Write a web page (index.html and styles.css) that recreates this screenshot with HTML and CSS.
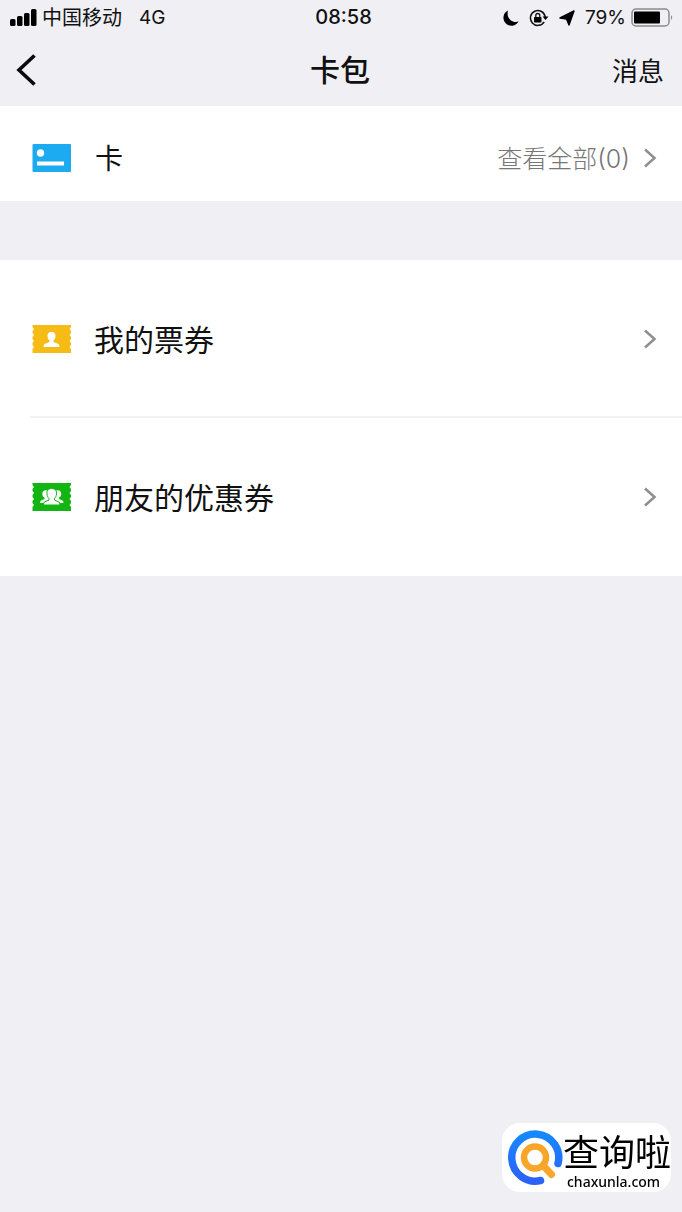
FILE: index.html
```html
<!DOCTYPE html>
<html lang="zh-CN">
<head>
<meta charset="utf-8">
<meta name="viewport" content="width=device-width, initial-scale=1">
<title>卡包</title>
<link rel="stylesheet" href="styles.css">
</head>
<body>
<div class="status">
  <div class="status-left">
    <svg class="signal" viewBox="0 0 27 17" aria-hidden="true"><rect x="0" y="10" width="5.500" height="7" rx="1.5"/><rect x="7" y="7" width="5.500" height="10" rx="1.5"/><rect x="14" y="4" width="5.500" height="13" rx="1.5"/><rect x="21" y="0" width="5.500" height="17" rx="1.5"/></svg>
    <span>中国移动</span>
    <span class="network">4G</span>
  </div>
  <time class="clock">08:58</time>
  <div class="status-right">
    <svg class="moon" viewBox="0 0 16 16" aria-hidden="true"><path d="M5 .5A8 8 0 1 0 15.500 11.500C8.500 13.500 3 7.500 5 .5Z"/></svg>
    <svg class="lock" viewBox="0 0 20 18" aria-hidden="true"><path d="M16.200 8A7.400 7.400 0 1 0 15.200 12.800" fill="none" stroke="#111" stroke-width="1.500"/><path d="M13.500 7.500H19.500L16.500 11Z"/><rect x="5" y="8" width="7.500" height="5.500" rx=".7"/><path d="M6.800 8V6.500a2 2 0 0 1 4 0V8" fill="none" stroke="#111" stroke-width="1.300"/></svg>
    <svg class="arrow" viewBox="0 0 16 16" aria-hidden="true"><path d="M15 1L10 15L7.500 9L1 8Z" stroke="#000" stroke-width="1.400" stroke-linejoin="round"/></svg>
    <span>79%</span>
    <svg class="battery" viewBox="0 0 43 19" aria-hidden="true"><rect x="1" y="1" width="37" height="17" rx="4" fill="none" stroke="#8b8b8f" stroke-width="1.500"/><rect x="3" y="3.500" width="26" height="12" rx="1"/><path d="M40 7q2.500 2.500 0 5Z" fill="#8b8b8f"/></svg>
  </div>
</div>
<header class="nav">
  <button class="back" type="button" aria-label="返回"><svg viewBox="0 0 20 32" aria-hidden="true"><path d="M18.500 1.500L3 16L18.500 30.500" fill="none" stroke="#0b0b0d" stroke-width="3.600"/></svg></button>
  <h1 class="title">卡包</h1>
  <a class="messages" href="#messages">消息</a>
</header>
<main>
  <section class="group">
    <a class="row row-card" href="#cards">
      <svg class="icon" viewBox="0 0 39 28" aria-hidden="true"><rect x=".5" width="38.500" height="28" rx="1" fill="#1caaf0"/><circle cx="8.500" cy="9" r="3.700" fill="#fff"/><rect x="5" y="17.500" width="27" height="4" fill="#fff"/></svg>
      <span class="label">卡</span>
      <span class="count">查看全部(0)</span>
      <svg class="chevron" viewBox="0 0 14 20" aria-hidden="true"><path d="M2 1.500L11.500 10L2 18.500"/></svg>
    </a>
  </section>
  <section class="group">
    <a class="row" href="#tickets">
      <svg class="icon" viewBox="0 0 39 28" aria-hidden="true"><path fill="#f7bb16" d="M.5 0H39V2L37.500 4L39 6V8L37.500 10L39 12V14L37.500 16L39 18V20L37.500 22L39 24V28H.5V24L2 22L.5 20V18L2 16L.5 14V12L2 10L.5 8V6L2 4L.5 2Z"/><path fill="#fff" d="M19.500 7C16.300 7 15.300 9 15.500 11.500C15.700 13.500 16.500 14.500 17.500 15.500V17L12.500 19Q11.500 19.500 11.500 22H27.500Q27.500 19.500 26.500 19L21.500 17V15.500C22.500 14.500 23.300 13.500 23.500 11.500C23.700 9 22.700 7 19.500 7Z"/></svg>
      <span class="label">我的票券</span>
      <svg class="chevron" viewBox="0 0 14 20" aria-hidden="true"><path d="M2 1.500L11.500 10L2 18.500"/></svg>
    </a>
    <a class="row" href="#coupons">
      <svg class="icon" viewBox="0 0 39 28" aria-hidden="true"><path fill="#12b512" d="M.5 0H39V2L37.500 4L39 6V8L37.500 10L39 12V14L37.500 16L39 18V20L37.500 22L39 24V28H.5V24L2 22L.5 20V18L2 16L.5 14V12L2 10L.5 8V6L2 4L.5 2Z"/><g fill="#fff"><circle cx="14" cy="11" r="3.700"/><circle cx="25.500" cy="11" r="3.700"/><path d="M12.500 13H17V20H8Q8 18 9 17.500L12.500 16ZM27 13H22V20H31.500Q31.500 18 30.500 17.500L27 16Z"/><path stroke="#12b512" stroke-width="1" d="M19.750 5.500C16 5.500 14.600 8 15 11C15.300 13.500 16 14.500 17 15.500V17L12.500 19Q11.500 19.500 11.500 22H28Q28 19.500 27 19L22.500 17V15.500C23.500 14.500 24.200 13.500 24.500 11C24.900 8 23.500 5.500 19.750 5.500Z"/></g></svg>
      <span class="label">朋友的优惠券</span>
      <svg class="chevron" viewBox="0 0 14 20" aria-hidden="true"><path d="M2 1.500L11.500 10L2 18.500"/></svg>
    </a>
  </section>
</main>
<aside class="brand">
  <svg class="brand-mark" viewBox="0 0 56 56" aria-hidden="true">
    <defs><linearGradient id="ring" x1="0" y1="0" x2="0" y2="1"><stop offset="0" stop-color="#1688ff"/><stop offset="1" stop-color="#2c62f6"/></linearGradient></defs>
    <path d="M33.500 50.500A23.500 23.500 0 1 1 51 33.500" fill="none" stroke="url(#ring)" stroke-width="7.500" stroke-linecap="round"/>
    <circle cx="28" cy="27.500" r="11" fill="none" stroke="#f8a62a" stroke-width="6.500"/><path d="M37 36.500L44.500 44.500" stroke="#f8a62a" stroke-width="7" stroke-linecap="round"/>
  </svg>
  <div class="brand-text"><span class="brand-name">查询啦</span><span class="brand-url">chaxunla.com</span></div>
</aside>
</body>
</html>
```
FILE: styles.css
```css
* { box-sizing: border-box; }
body {
  margin: 0;
  min-height: 100vh;
  background: #efeff4;
  color: #111;
  font-family: Inter, "Noto Sans CJK SC", sans-serif;
}
svg { display: block; flex: none; }
a { color: inherit; text-decoration: none; }
.status, .nav {
  display: grid;
  grid-template-columns: 1fr auto 1fr;
  align-items: center;
}
.status { height: 34px; padding: 0 8px 0 10px; font-size: 20px; line-height: 30px; }
.status-left, .status-right { display: flex; align-items: center; padding-top: 1px; }
.status-left { gap: 5px; }
.status-right { justify-content: flex-end; gap: 10px; font-size: 19px; }
.signal { width: 27px; height: 17px; }
.network { margin-left: 12px; font-size: 19px; }
.clock { padding-left: 3px; font-size: 20px; font-weight: 500; }
.moon, .arrow { width: 16px; height: 16px; }
.lock { width: 20px; height: 18px; }
.battery { width: 43px; height: 19px; margin-left: -5px; }
.nav { height: 72px; padding: 0 18px 0 16px; }
.back { width: 44px; padding: 0; border: 0; background: none; }
.back svg { width: 20px; height: 32px; }
.title { margin: 0; font-size: 30px; line-height: 40px; font-weight: 500; }
.messages { justify-self: end; padding-top: 3px; font-size: 26px; line-height: 36px; }
main { display: grid; gap: 59px; }
.group { background: #fff; }
.row {
  display: flex;
  align-items: center;
  height: 158px;
  padding: 0 25px 0 32px;
  font-size: 30px;
  line-height: 40px;
}
.row:not(:last-child) {
  background: linear-gradient(#f2f2f2, #f2f2f2) 30px 100% / 100% 2px no-repeat;
}
.row-card { height: 95px; padding-top: 8px; font-size: 28px; }
.icon { width: 39px; height: 28px; margin-right: 23px; }
.label { flex: 1; padding-top: 2px; }
.row-card .label { padding-left: 1px; }
.count { margin-right: 13px; padding-top: 3px; color: #777; font-size: 25px; font-weight: 300; }
.chevron { width: 14px; height: 20px; fill: none; stroke: #8f8f93; stroke-width: 2.5px; }
.brand {
  position: fixed;
  right: 11px;
  bottom: 20px;
  display: flex;
  align-items: center;
  height: 69px;
  padding-left: 5px;
  border-radius: 18px;
  background: #fff;
  color: #000;
}
.brand-mark { width: 56px; height: 56px; }
.brand-text { display: flex; flex-direction: column; }
.brand-name { font: 36px/48px "Noto Sans CJK SC", sans-serif; }
.brand-url { padding-left: 4px; font: 500 14px/16px "Noto Sans", sans-serif; }
```
